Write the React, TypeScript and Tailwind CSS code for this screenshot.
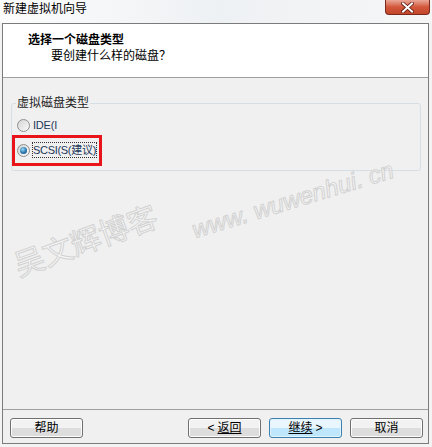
import React from "react";

const font = "font-['Liberation_Sans','Noto_Sans_CJK_SC',sans-serif]";

interface WizardButtonProps {
    children: React.ReactNode;
    primary?: boolean;
}

function WizardButton({ children, primary }: WizardButtonProps) {
    return (
        <div
            className={
                primary
                    ? "w-[73px] h-[20px] rounded-[3px] border border-[#3c7fb1] bg-gradient-to-b from-[#eaf6fd] from-50% to-[#bee6fd] to-50% flex items-center justify-center text-[12px] text-black shadow-[inset_0_0_0_1px_#e3f4fc]"
                    : "w-[73px] h-[20px] rounded-[3px] border border-[#707070] bg-gradient-to-b from-[#f2f2f2] from-50% to-[#dddddd] to-50% flex items-center justify-center text-[12px] text-black shadow-[inset_0_0_0_1px_#fcfcfc]"
            }
        >
            {children}
        </div>
    );
}

function Radio({ checked }: { checked?: boolean }) {
    return (
        <div className="w-[13px] h-[13px] shrink-0 rounded-full border border-[#8e8f8f] bg-gradient-to-br from-[#d4d4d4] to-[#fbfbfb] flex items-center justify-center">
            {checked && (
                <div className="w-[7px] h-[7px] rounded-full bg-[radial-gradient(circle_at_40%_35%,#9adaf7,#2a76ae_55%,#1b4e79)]" />
            )}
        </div>
    );
}

export default function App() {
    return (
        <div className={`relative w-[432px] h-[447px] overflow-hidden bg-[#f3f3f3] ${font}`}>
            {/* 标题栏 */}
            <div className="h-[23px] flex items-start justify-between bg-gradient-to-r from-[#fcfcfc] via-[#eef1f4] to-[#f6f6f6]">
                <span className="pl-[3px] pt-[2px] text-[12px] leading-[15px] text-black">新建虚拟机向导</span>
                <div className="mr-[2px] w-[45px] h-[15px] rounded-b-[4px] border border-t-0 border-[#7a2a1c] bg-gradient-to-b from-[#e9a899] via-[#d2573b] to-[#c3462a] flex items-center justify-center">
                    <svg width="13" height="11" viewBox="0 0 13 11">
                        <path d="M2 1.5 L11 9.5 M11 1.5 L2 9.5" stroke="#5a1a10" strokeWidth="3.6" strokeLinecap="square" />
                        <path d="M2 1.5 L11 9.5 M11 1.5 L2 9.5" stroke="#ffffff" strokeWidth="2" strokeLinecap="square" />
                    </svg>
                </div>
            </div>

            {/* 对话框 */}
            <div className="mx-[2px] w-[427px] h-[421px] border border-[#7b7b7b] flex flex-col">
                <div className="h-[54px] bg-white border-b border-[#a0a0a0] pt-[8px] pl-[25px]">
                    <div className="text-[12px] leading-[16px] font-bold text-black">选择一个磁盘类型</div>
                    <div className="pl-[23px] text-[12px] leading-[16px] text-black">要创建什么样的磁盘？</div>
                </div>

                <div className="flex-1 bg-[#f0f0f0] flex flex-col">
                    <fieldset className="mt-[17px] ml-[8px] mr-[7px] h-[76px] rounded-[3px] border border-[#d5dfe5] px-[5px]">
                        <legend className="ml-[-1px] px-[1px] text-[12px] leading-[16px] text-[#1e1e1e]">虚拟磁盘类型</legend>
                        <div className="mt-[6px] flex items-center gap-[3px] h-[16px]">
                            <Radio />
                            <span className="text-[11px] leading-[14px] tracking-[-0.2px] text-[#1e395b]">IDE(I</span>
                        </div>
                        <div className="mt-[9px] flex items-center gap-[3px] h-[16px]">
                            <Radio checked />
                            <span className="whitespace-nowrap text-[11px] leading-[14px] tracking-[-0.3px] text-[#1e395b] outline outline-1 outline-dotted outline-[#333]">SCSI(S(建议)</span>
                        </div>
                    </fieldset>

                    <div className="flex-1" />

                    <div className="h-[34px] border-t border-[#a0a0a0] flex items-start pt-[8px] pl-[7px] pr-[5px]">
                        <WizardButton>帮助</WizardButton>
                        <div className="flex-1" />
                        <div className="flex gap-[8px]">
                            <WizardButton>&lt; <span className="ml-[3px] underline">返回</span></WizardButton>
                            <WizardButton primary><span className="underline">继续</span><span className="ml-[3px]">&gt;</span></WizardButton>
                            <WizardButton>取消</WizardButton>
                        </div>
                    </div>
                </div>
            </div>

            {/* 标注红框 */}
            <div className="absolute left-[12px] top-[135px] w-[90px] h-[31px] border-[3px] border-[#e8141a]" />

            {/* 水印 */}
            <div className="pointer-events-none absolute left-[10px] top-[222px] -rotate-[20deg] whitespace-nowrap text-[30px] leading-[34px] text-[#f6f6f6] [-webkit-text-stroke:1px_#d2d2d2] font-['Noto_Sans_CJK_SC',sans-serif]">
                吴文辉博客
            </div>
            <div className="pointer-events-none absolute left-[188px] top-[186px] -rotate-[17deg] whitespace-nowrap text-[24px] leading-[28px] italic text-[#f6f6f6] [-webkit-text-stroke:1px_#d2d2d2] font-['Liberation_Sans',sans-serif]">
                www. wuwenhui. cn
            </div>
        </div>
    );
}
